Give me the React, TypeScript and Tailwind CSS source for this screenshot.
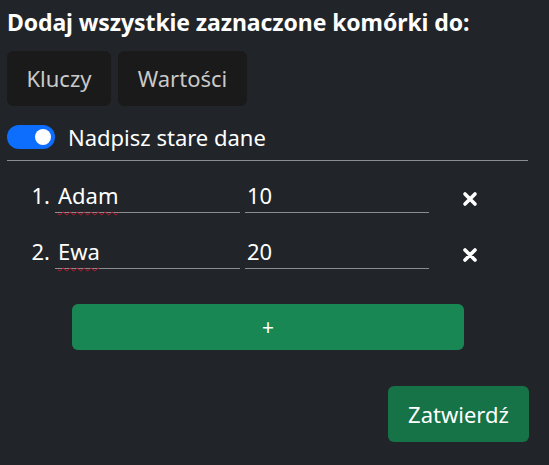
import React, { useState } from 'react';

const XIcon = () => (
  <svg width="16" height="16" viewBox="0 0 16 16" className="block">
    <path d="M3 3 L13 13 M13 3 L3 13" stroke="white" strokeWidth="3.6" strokeLinecap="round" />
  </svg>
);

// input with a fake spell-check squiggle under the text
const SpellInput: React.FC<{ value: string; onChange: (v: string) => void }> = ({ value, onChange }) => (
  <div className="relative w-[185px] h-[36px] border-b border-[#8a8d90]">
    <input
      value={value}
      onChange={e => onChange(e.target.value)}
      className="w-full h-full bg-transparent outline-none text-[22px] text-white px-[3px]"
    />
    <span className="pointer-events-none absolute left-[3px] top-0 h-full leading-[36px] text-[22px] text-transparent underline decoration-wavy decoration-[#c8102e] decoration-[1px] underline-offset-[7px] whitespace-pre">
      {value}
    </span>
  </div>
);

const App: React.FC = () => {
  const [overwrite, setOverwrite] = useState(true);
  const [rows, setRows] = useState([
    { key: 'Adam', value: '10' },
    { key: 'Ewa', value: '20' },
  ]);

  return (
    <div className="min-h-[465px] w-[549px] bg-[#212529] text-[#dee2e6] px-[7px] pt-[6px]" style={{ fontFamily: '"Noto Sans", "Open Sans", sans-serif' }}>
      <h5 className="text-[23px] font-bold text-white leading-[32px] tracking-[-0.1px]">Dodaj wszystkie zaznaczone komórki do:</h5>

      <div className="flex gap-[7px] mt-[13px]">
        <button className="h-[55px] w-[104px] rounded-[6px] bg-[#1a1a1a] text-[#c9c9c9] text-[22px]">Kluczy</button>
        <button className="h-[55px] w-[129px] rounded-[6px] bg-[#1a1a1a] text-[#c9c9c9] text-[22px]">Wartości</button>
      </div>

      <label className="flex items-center gap-[13px] mt-[18px] h-[26px] cursor-pointer">
        <span
          onClick={() => setOverwrite(!overwrite)}
          className={`relative w-[48px] h-[24px] rounded-full ${overwrite ? 'bg-[#0d6efd]' : 'bg-[#343a40] border border-[#6c757d]'}`}
        >
          <span className={`absolute top-[4px] w-[16px] h-[16px] rounded-full bg-white ${overwrite ? 'left-[28px]' : 'left-[4px]'}`}></span>
        </span>
        <span className="text-[22px] text-white">Nadpisz stare dane</span>
      </label>

      <hr className="mt-[10px] w-[521px] border-t border-[#8a8d90]" />

      <ol className="mt-[16px] flex flex-col gap-[20px]">
        {rows.map((r, i) => (
          <li key={i} className="flex items-end h-[36px]">
            <span className="w-[48px] text-right pr-[5px] text-[22px] text-white leading-[36px]">{i + 1}.</span>
            <SpellInput
              value={r.key}
              onChange={v => setRows(rows.map((x, j) => (j === i ? { ...x, key: v } : x)))}
            />
            <input
              value={r.value}
              onChange={e => setRows(rows.map((x, j) => (j === i ? { ...x, value: e.target.value } : x)))}
              className="ml-[5px] w-[184px] h-[36px] bg-transparent border-b border-[#8a8d90] outline-none text-[22px] text-white px-[2px]"
            />
            <button onClick={() => setRows(rows.filter((_, j) => j !== i))} className="ml-[33px] mb-[6px]">
              <XIcon />
            </button>
          </li>
        ))}
      </ol>

      <button
        onClick={() => setRows([...rows, { key: '', value: '' }])}
        className="block ml-[65px] mt-[35px] w-[392px] h-[46px] rounded-[6px] bg-[#198754] text-white text-[21px] leading-none"
      >
        +
      </button>

      <div className="flex justify-end pr-[13px] mt-[36px]">
        <button className="w-[141px] h-[56px] rounded-[6px] bg-[#157347] text-white text-[22px]">Zatwierdź</button>
      </div>
    </div>
  );
};

export default App;
